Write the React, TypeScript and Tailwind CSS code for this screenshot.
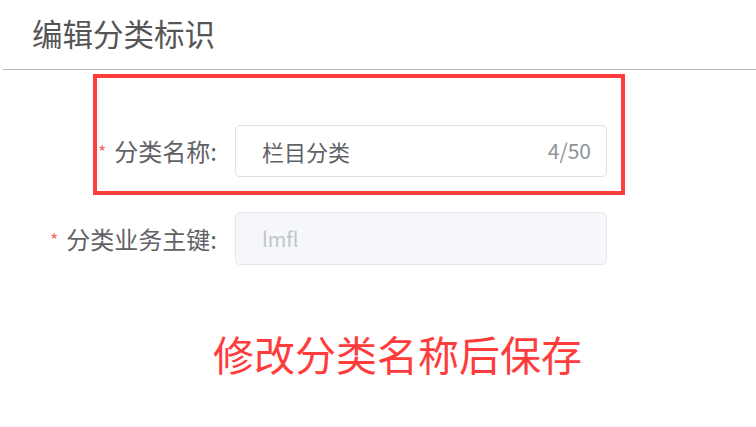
const FONT = '"Microsoft YaHei", "Noto Sans CJK SC", "Liberation Sans", sans-serif';

function Label({ text, width }: { text: string; width: number }) {
  return (
    <div
      className="flex shrink-0 items-center justify-end pr-[18px] text-[24px] text-[#606266]"
      style={{ width }}
    >
      <span className="mr-[8px] text-[18px] leading-none text-[#f56c6c]">*</span>
      <span>{text}:</span>
    </div>
  );
}

export default function App() {
  return (
    <div className="h-[427px] w-[756px] bg-white" style={{ fontFamily: FONT }}>
      {/* 标题 */}
      <div className="ml-[3px] flex h-[70px] items-center border-b border-[#b8b8b8] pb-[2px] pl-[29px]">
        <h2 className="text-[30.5px] font-normal text-[#555555]">编辑分类标识</h2>
      </div>

      {/* 标注框 */}
      <div className="ml-[93px] mt-[4px] w-[532px] border-4 border-[#ff3c3c] pb-[14px] pt-[47px]">
        <div className="flex items-center">
          <Label text="分类名称" width={138} />
          <div className="flex h-[52px] w-[372px] items-center justify-between rounded-[5px] border border-[#dcdfe6] pl-[26px] pr-[15px]">
            <span className="text-[22px] text-[#606266]">栏目分类</span>
            <span className="text-[21px] text-[#909399]">4/50</span>
          </div>
        </div>
      </div>

      <div className="mt-[17px] flex items-center">
        <Label text="分类业务主键" width={235} />
        <div className="flex h-[53px] w-[372px] items-center rounded-[5px] border border-[#e4e7ed] bg-[#f5f7fa] pl-[26px]">
          <span className="text-[20px] text-[#c0c4cc]">lmfl</span>
        </div>
      </div>

      <p className="ml-[213px] mt-[68px] text-[41px] leading-none text-[#ff3c3c]">
        修改分类名称后保存
      </p>
    </div>
  );
}
